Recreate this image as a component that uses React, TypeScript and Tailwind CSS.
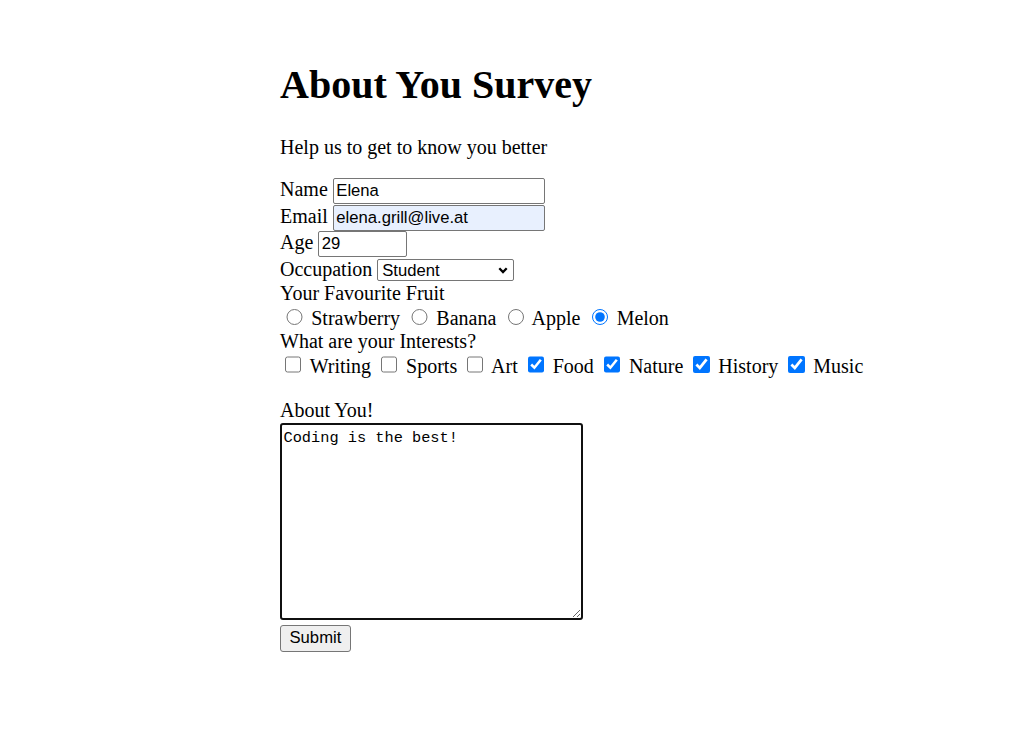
const fruits = ['Strawberry', 'Banana', 'Apple', 'Melon']

const interests = [
  { name: 'Writing', checked: false },
  { name: 'Sports', checked: false },
  { name: 'Art', checked: false },
  { name: 'Food', checked: true },
  { name: 'Nature', checked: true },
  { name: 'History', checked: true },
  { name: 'Music', checked: true },
]

const field =
  "h-[26px] border border-[#767676] rounded-[2px] px-[2.5px] align-baseline font-['Liberation_Sans',Arial,sans-serif] text-[16.67px] leading-[normal] text-black"

function Occupation() {
  return (
    <span className="relative inline-block align-baseline">
      <select
        defaultValue="student"
        className="h-[22px] w-[137px] appearance-none border border-[#767676] rounded-[2px] bg-white pl-[4px] align-baseline font-['Liberation_Sans',Arial,sans-serif] text-[16.67px] leading-[normal] text-black"
      >
        <option value="student">Student</option>
        <option value="employed">Employed</option>
        <option value="other">Other</option>
      </select>
      <svg
        className="pointer-events-none absolute right-[6px] top-[9px]"
        width="10"
        height="7"
        viewBox="0 0 10 7"
        fill="none"
      >
        <path d="M1.3 1.3 L5 5 L8.7 1.3" stroke="#000" strokeWidth="2.3" />
      </svg>
    </span>
  )
}

export default function App() {
  return (
    <div className="min-h-[741px] bg-white pl-[280px] pt-[61px] font-['Liberation_Serif','Times_New_Roman',serif] text-[20px] leading-[normal] text-black">
      <h1 className="text-[40px] font-bold leading-[normal]">About You Survey</h1>
      <p className="mt-[28px]">Help us to get to know you better</p>

      <form className="mt-[19px]" onSubmit={(e) => e.preventDefault()}>
        <div className="h-[26.6px]">
          Name{' '}
          <input type="text" defaultValue="Elena" className={`${field} w-[212px] bg-white`} />
        </div>
        <div className="h-[26.6px]">
          Email{' '}
          <input
            type="email"
            defaultValue="elena.grill@live.at"
            className={`${field} w-[212px] bg-[#e8f0fe]`}
          />
        </div>
        <div className="h-[26.6px]">
          Age{' '}
          <input type="text" defaultValue="29" className={`${field} w-[89px] bg-white`} />
        </div>
        <div className="h-[24px]">
          Occupation <Occupation />
        </div>

        <div className="h-[23px]">Your Favourite Fruit</div>
        <div className="h-[24.8px]">
          {fruits.map((fruit, i) => (
            <span key={fruit}>
              {i > 0 && ' '}
              <input
                type="radio"
                name="fruit"
                defaultChecked={fruit === 'Melon'}
                className="ml-[6.25px] mr-[3.75px] mt-[3.75px] h-[16.25px] w-[16.25px] align-baseline"
              />{' '}
              {fruit}
            </span>
          ))}
        </div>

        <div className="h-[23px]">What are your Interests?</div>
        <div className="h-[24.8px]">
          {interests.map((item, i) => (
            <span key={item.name}>
              {i > 0 && ' '}
              <input
                type="checkbox"
                defaultChecked={item.checked}
                className="ml-[5px] mr-[3.75px] my-[3.75px] h-[16.25px] w-[16.25px] align-baseline"
              />{' '}
              {item.name}
            </span>
          ))}
        </div>

        <div className="mt-[21.4px] h-[23px]">About You!</div>
        <textarea
          defaultValue="Coding is the best!"
          className="mt-[1px] block h-[197px] w-[303px] rounded-[3px] border-2 border-[#101010] bg-white pl-[1.5px] pt-[4px] font-['Liberation_Mono','Courier_New',monospace] text-[15.3px] leading-[normal] text-black outline-none"
        />
        <button
          type="submit"
          className="mt-[5px] block h-[27px] rounded-[3px] border border-[#767676] bg-[#efefef] px-[8.5px] font-['Liberation_Sans',Arial,sans-serif] text-[16.67px] leading-[normal] text-black"
        >
          Submit
        </button>
      </form>
    </div>
  )
}
